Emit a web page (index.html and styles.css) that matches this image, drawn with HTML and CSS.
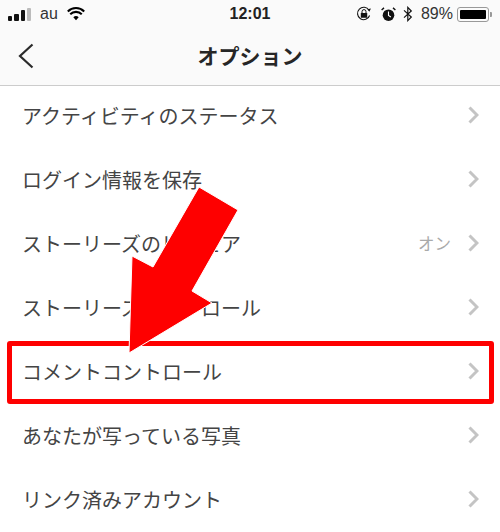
FILE: index.html
```html
<!DOCTYPE html>
<html lang="ja">
<head>
<meta charset="utf-8">
<title>オプション</title>
<link rel="stylesheet" href="styles.css">
</head>
<body>
<div class="screen">
  <header class="top">
    <div class="status">
      <div class="status-left">
        <span class="signal"><i></i><i></i><i></i><i class="off"></i></span>
        <span class="carrier">au</span>
        <svg class="wifi" width="18" height="14" viewBox="0 0 20 15"><path d="M10 14.5 7 11.2a4.3 4.3 0 0 1 6 0z" fill="#000"/><path d="M3.6 7.8a9 9 0 0 1 12.8 0M.9 4.6a13 13 0 0 1 18.2 0" fill="none" stroke="#000" stroke-width="2.3"/></svg>
      </div>
      <div class="clock">12:01</div>
      <div class="status-right">
        <svg class="lock" width="16" height="16" viewBox="0 0 16 16"><path d="M13.6 9.5A6.2 6.2 0 1 1 13 4.2" fill="none" stroke="#111" stroke-width="1.1"/><path d="M11.6 5.2h3.6l-1.4-3z" fill="#111" transform="rotate(170 13.4 4)"/><rect x="4.8" y="7" width="6.4" height="4.8" rx=".6" fill="#111"/><path d="M6 7V5.6a2 2 0 0 1 4 0V7" fill="none" stroke="#111" stroke-width="1"/></svg>
        <svg class="alarm" width="15" height="15" viewBox="0 0 15 15"><circle cx="7.5" cy="8.2" r="5.8" fill="#111"/><path d="M7.5 4.5v4l2.4 1.4" fill="none" stroke="#fff" stroke-width="1.1"/><path d="M.6 3 3 .9M14.4 3 12 .9" stroke="#111" stroke-width="1.4"/></svg>
        <svg class="bt" width="10" height="16" viewBox="0 0 10 16"><path d="M1 4.4 8.3 11 4.8 14.6V1.4L8.3 5 1 11.6" fill="none" stroke="#111" stroke-width="1.2"/></svg>
        <span class="percent">89%</span>
        <span class="battery"><span class="battery-fill"></span></span>
        <span class="battery-tip"></span>
      </div>
    </div>
    <div class="nav">
      <svg class="back" width="16" height="26" viewBox="0 0 16 26"><path d="M14.5 1.5 2 13l12.5 11.5" fill="none" stroke="#2a2a2a" stroke-width="2.2"/></svg>
      <h1 class="title">オプション</h1>
    </div>
  </header>
  <ul class="list">
    <li class="row"><span class="label">アクティビティのステータス</span><svg class="chev" width="12" height="18" viewBox="0 0 12 18"><path d="M2.5 1.5 10 9l-7.5 7.5"/></svg></li>
    <li class="row"><span class="label">ログイン情報を保存</span><svg class="chev" width="12" height="18" viewBox="0 0 12 18"><path d="M2.5 1.5 10 9l-7.5 7.5"/></svg></li>
    <li class="row"><span class="label">ストーリーズのリシェア</span><span class="value">オン</span><svg class="chev" width="12" height="18" viewBox="0 0 12 18"><path d="M2.5 1.5 10 9l-7.5 7.5"/></svg></li>
    <li class="row"><span class="label">ストーリーズコントロール</span><svg class="chev" width="12" height="18" viewBox="0 0 12 18"><path d="M2.5 1.5 10 9l-7.5 7.5"/></svg></li>
    <li class="row"><span class="label">コメントコントロール</span><svg class="chev" width="12" height="18" viewBox="0 0 12 18"><path d="M2.5 1.5 10 9l-7.5 7.5"/></svg></li>
    <li class="row"><span class="label">あなたが写っている写真</span><svg class="chev" width="12" height="18" viewBox="0 0 12 18"><path d="M2.5 1.5 10 9l-7.5 7.5"/></svg></li>
    <li class="row"><span class="label">リンク済みアカウント</span><svg class="chev" width="12" height="18" viewBox="0 0 12 18"><path d="M2.5 1.5 10 9l-7.5 7.5"/></svg></li>
  </ul>
  <div class="highlight"></div>
  <svg class="arrow" width="500" height="532" viewBox="0 0 500 532"><polygon points="199,187 238,210 192,291 212,303 129,353 132,256 153,267" fill="#fe0000" stroke="#fff" stroke-width="1"/></svg>
</div>
</body>
</html>
```
FILE: styles.css
```css
* { box-sizing: border-box; }
html, body { margin: 0; padding: 0; }
body { background: #fff; font-family: "Liberation Sans", "Noto Sans CJK JP", sans-serif; color: #333; }
.screen { position: relative; width: 500px; height: 532px; overflow: hidden; background: #fff; }
.top { height: 86px; background: #fafafa; border-bottom: 1px solid #ccc; }
.status { height: 28px; display: grid; grid-template-columns: 1fr auto 1fr; align-items: center; padding: 0 8px; color: #111; font-size: 15.5px; }
.status-left { display: flex; align-items: center; gap: 9px; }
.signal { display: flex; align-items: flex-end; gap: 2px; height: 13px; width: 23px; }
.signal i { display: block; width: 4.25px; background: #111; border-radius: 1px; }
.signal i:nth-child(1) { height: 5px; }
.signal i:nth-child(2) { height: 7px; }
.signal i:nth-child(3) { height: 11px; }
.signal i:nth-child(4) { height: 13px; }
.signal .off { background: #bbb; }
.carrier { color: #333; font-size: 16px; }
.clock { font-weight: 700; font-size: 16px; color: #222; }
.status-right { display: flex; align-items: center; justify-content: flex-end; }
.lock { margin-right: 9px; }
.alarm { margin-right: 7px; }
.bt { margin-right: 8px; }
.percent { font-size: 16px; color: #333; margin-right: 4px; }
.battery { display: flex; width: 32px; height: 15px; padding: 2px; border: 1px solid #999; border-radius: 3px; }
.battery-fill { flex: 1; background: #000; border-radius: 1px; }
.battery-tip { width: 2px; height: 5px; margin-left: 1px; background: #999; border-radius: 0 1px 1px 0; }
.nav { position: relative; height: 57px; display: flex; align-items: center; justify-content: center; padding-bottom: 3px; }
.back { position: absolute; left: 18px; top: 15px; }
.title { margin: 0; font-size: 21px; font-weight: 700; color: #262626; font-family: "Noto Sans CJK JP", sans-serif; }
.list { margin: -3px 0 0; padding: 0; list-style: none; }
.row { height: 64px; display: flex; align-items: center; padding: 0 21px 0 22px; font-family: "Noto Sans CJK JP", sans-serif; font-size: 20px; color: #444; }
.label { flex: 1; white-space: nowrap; }
.value { font-size: 16.5px; color: #aaa; margin-right: 16px; }
.chev { flex: none; }
.chev path { fill: none; stroke: #c4c4c4; stroke-width: 3; }
.highlight { position: absolute; left: 7px; top: 341px; width: 487px; height: 63px; border: 5px solid #fe0000; border-radius: 3px; }
.arrow { position: absolute; left: 0; top: 0; }
```
